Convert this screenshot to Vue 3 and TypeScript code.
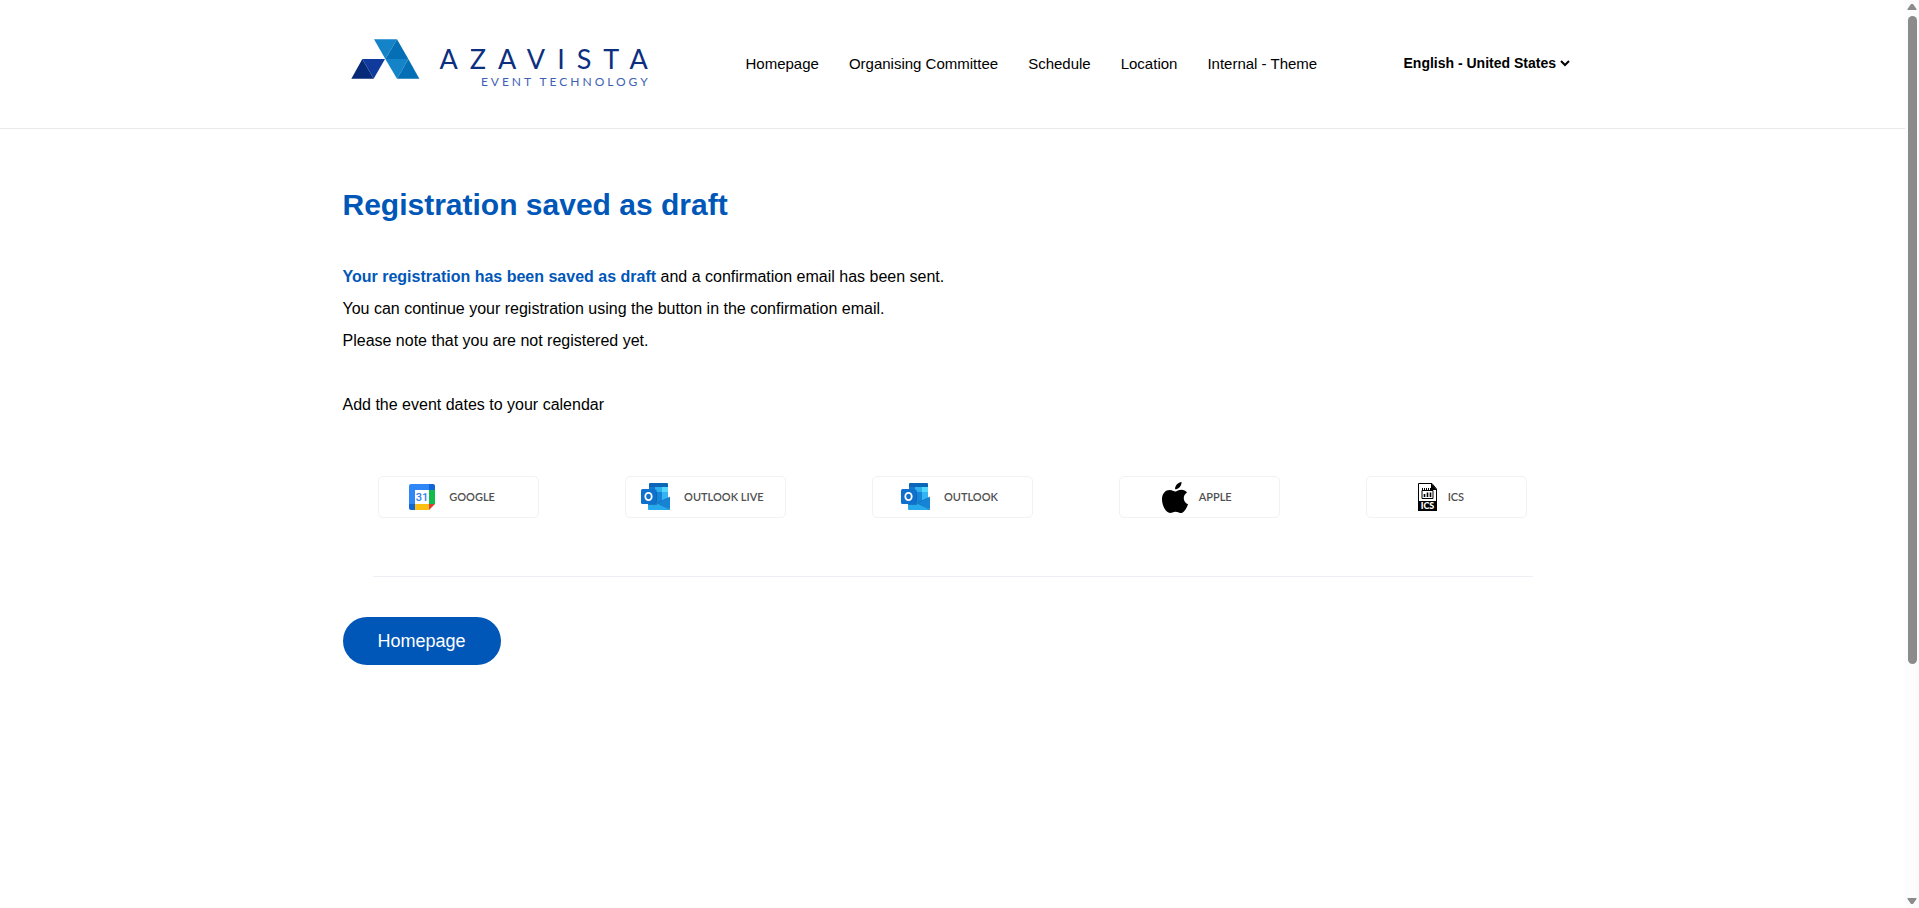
<script setup lang="ts">
import { ref } from 'vue'

interface CalendarLink {
  id: 'google' | 'outlook-live' | 'outlook' | 'apple' | 'ics'
  label: string
}

const navItems: string[] = ['Homepage', 'Organising Committee', 'Schedule', 'Location', 'Internal - Theme']

const calendars: CalendarLink[] = [
  { id: 'google', label: 'GOOGLE' },
  { id: 'outlook-live', label: 'OUTLOOK LIVE' },
  { id: 'outlook', label: 'OUTLOOK' },
  { id: 'apple', label: 'APPLE' },
  { id: 'ics', label: 'ICS' },
]

const language = ref('en-US')
</script>

<template>
  <div class="page">
    <div class="content">
      <header class="header">
        <div class="header-inner">
          <a href="#" class="logo">
            <svg class="logo-mark" viewBox="33 42 205 120" aria-hidden="true">
              <path d="M66 102 33 161H100Z" fill="#062a78" />
              <path d="M66 102H134L100 161Z" fill="#103a9c" />
              <path d="M101 43H170L135 102Z" fill="#1583c8" />
              <path d="M170 43 204 102H135Z" fill="#046fb4" />
              <path d="M135 102H204L170 161Z" fill="#1583c8" />
              <path d="M204 102 237 161H170Z" fill="#046fb4" />
            </svg>
            <span class="logo-text">
              <span class="logo-name">AZAVISTA</span>
              <span class="logo-tag">EVENT TECHNOLOGY</span>
            </span>
          </a>
          <nav class="nav">
            <a v-for="item in navItems" :key="item" href="#">{{ item }}</a>
          </nav>
          <select v-model="language" class="language" aria-label="Language">
            <option value="en-US">English - United States</option>
          </select>
        </div>
      </header>

      <main class="main">
        <h1>Registration saved as draft</h1>
        <div class="message">
          <p><strong>Your registration has been saved as draft</strong> and a confirmation email has been sent.</p>
          <p>You can continue your registration using the button in the confirmation email.</p>
          <p>Please note that you are not registered yet.</p>
        </div>
        <p class="calendar-title">Add the event dates to your calendar</p>

        <div class="calendars">
          <a v-for="cal in calendars" :key="cal.id" href="#" class="calendar" :class="cal.id">
            <svg v-if="cal.id === 'google'" class="icon-google" viewBox="0 0 26 26" aria-hidden="true">
              <path d="M2 0H20V6H6V20H0V2A2 2 0 0 1 2 0Z" fill="#2f86f6" />
              <path d="M20 0H24A2 2 0 0 1 26 2V6H20Z" fill="#1266d3" />
              <path d="M20 6H26V20H20Z" fill="#12bb4c" />
              <path d="M6 20H20V26H6Z" fill="#fbbf10" />
              <path d="M0 20H6V26H2A2 2 0 0 1 0 24Z" fill="#1266d3" />
              <path d="M20 20H26L20 26Z" fill="#df3b32" />
              <path d="M6 6H20V20H6Z" fill="#fff" />
              <text x="13" y="17" text-anchor="middle" font-family="Roboto, sans-serif" font-size="11" font-weight="500" fill="#2f80ee">31</text>
            </svg>
            <svg v-else-if="cal.id === 'outlook' || cal.id === 'outlook-live'" class="icon-outlook" viewBox="0 0 29 28" aria-hidden="true">
              <path d="M9 0H26A1 1 0 0 1 27 1V20H8V1A1 1 0 0 1 9 0Z" fill="#0c66b8" />
              <path d="M8 4H14V9H8Z" fill="#1477cb" />
              <path d="M14 4H21V9H14Z" fill="#2eb2ef" />
              <path d="M21 4H27V9H21Z" fill="#55d7fb" />
              <path d="M8 9H14V16H8Z" fill="#0b559f" />
              <path d="M14 9H21V20H14Z" fill="#1685d9" />
              <path d="M21 9H27V18H21Z" fill="#32b5f2" />
              <path d="M7 17 17 19 29 26A1 1 0 0 1 28 27H8A1 1 0 0 1 7 26Z" fill="#27a9ee" />
              <path d="M16 20 29 14V26Z" fill="#1683d5" />
              <path d="M16 20 29 26.500M16 20 29 14" fill="none" stroke="#1269b5" stroke-width="0.600" />
              <path d="M7 7H15A1 1 0 0 1 16 8V22H7Z" fill="#084b8d" opacity="0.500" />
              <rect x="0" y="6" width="15" height="15" rx="1.500" fill="#1071cc" />
              <ellipse cx="7.500" cy="13.500" rx="3.200" ry="3.700" fill="none" stroke="#fff" stroke-width="1.800" />
            </svg>
            <svg v-else-if="cal.id === 'apple'" class="icon-apple" viewBox="0 0 26 31" aria-hidden="true">
              <path d="M19.500 0C19.800 3.800 16.700 7.300 13.100 7.300 12.700 3.900 16 .5 19.500 0ZM25 10.600C20.300 13.500 20.800 20 26 22.300 25.200 24.800 22.500 30.500 19.300 31 17 31.200 16 29.700 13.600 29.700 11 29.700 10 31 8.100 31 3.800 31 0 23.300 0 17.500 0 11.200 3.700 8 7.600 8 10.200 8 11.900 9.500 13.300 9.500 14.700 9.500 16.700 7.800 19.700 7.800 21.500 7.800 23.700 8.700 25 10.600Z" fill="#000" />
            </svg>
            <svg v-else class="icon-ics" viewBox="0 0 19 28" aria-hidden="true">
              <path d="M1 .5H14L18.500 6V27.500H.5V.5Z" fill="#fff" stroke="#000" />
              <path d="M13 0 19 7H13Z" fill="#000" />
              <path d="M0 18H19V28H0Z" fill="#000" />
              <path d="M4 7.500H15V15.500H4Z" fill="#fff" stroke="#000" />
              <path d="M4.500 5V7M6.500 5V7M8.500 5V7M10.500 5V7M12.500 5V7" stroke="#000" />
              <path d="M6.500 11V14M9.500 9.500V14M12.500 9.500V14" stroke="#000" stroke-width="1.600" />
              <text x="9.500" y="26" text-anchor="middle" font-size="9" font-weight="900" fill="#fff">ICS</text>
            </svg>
            <span>{{ cal.label }}</span>
          </a>
        </div>

        <hr />
        <button type="button" class="home">Homepage</button>
      </main>
    </div>

    <div class="scrollbar" aria-hidden="true">
      <svg viewBox="0 0 10 8"><path d="M4 1H6L9.500 6V7H.5V6Z" fill="#8b8b8b" /></svg>
      <div class="track"><div class="thumb"></div></div>
      <svg viewBox="0 0 10 8"><path d="M4 7H6L9.500 2V1H.5V2Z" fill="#8b8b8b" /></svg>
    </div>
  </div>
</template>

<style>
body {
  margin: 0;
  background: #fff;
}
</style>

<style scoped>
.page {
  display: flex;
  min-height: 100vh;
  font-family: "Liberation Sans", Arial, sans-serif;
  font-size: 16px;
  color: #000;
}

.content {
  flex: 1;
  min-width: 0;
}

.header {
  border-bottom: 1px solid #e9e9e9;
}

.header-inner {
  display: flex;
  align-items: center;
  box-sizing: border-box;
  max-width: 1250px;
  min-height: 128px;
  margin: 0 auto;
  padding-bottom: 2px;
}

.logo {
  display: flex;
  align-items: flex-start;
  flex: 0 0 395px;
  gap: 20px;
  padding-top: 3px;
  padding-left: 23px;
  text-decoration: none;
  font-family: Lato, sans-serif;
}

.logo-mark {
  width: 69px;
  height: 40px;
}

.logo-text {
  display: flex;
  flex-direction: column;
  align-items: flex-end;
  padding-top: 5px;
}

.logo-name {
  font-size: 27px;
  line-height: 30px;
  letter-spacing: 12px;
  margin-right: -12px;
  color: #0d2f80;
}

.logo-tag {
  font-size: 12px;
  line-height: 16px;
  letter-spacing: 3px;
  margin-right: -3px;
  color: #3d61b5;
}

.nav {
  display: flex;
  gap: 30px;
  font-size: 15px;
  white-space: nowrap;
}

.nav a {
  color: #000;
  text-decoration: none;
}

.language {
  margin-left: auto;
  margin-right: 5px;
  border: 0;
  background: transparent;
  color: #000;
  font: 700 14px "Liberation Sans", Arial, sans-serif;
}

.main {
  max-width: 1220px;
  margin: 0 auto;
  padding-top: 56px;
}

h1 {
  margin: 0 0 36px;
  font-size: 30px;
  line-height: 40px;
  color: #0057b8;
}

p {
  margin: 0;
  line-height: 32px;
}

strong {
  color: #0057b8;
}

.message {
  margin-bottom: 32px;
}

.calendars {
  display: grid;
  grid-template-columns: repeat(5, 1fr);
  justify-items: center;
  margin: 55px -8px 0;
}

.calendar {
  display: flex;
  align-items: center;
  justify-content: center;
  box-sizing: border-box;
  width: 161px;
  height: 42px;
  gap: 14px;
  padding-right: 6px;
  border: 1px solid #f2f2f2;
  border-radius: 5px;
  color: #505050;
  font: 600 11px Lato, sans-serif;
  text-decoration: none;
}

.calendar span {
  padding-bottom: 2px;
}

.google,
.ics {
  padding-right: 12px;
}

.apple,
.ics {
  gap: 11px;
}

.icon-google {
  width: 26px;
  height: 26px;
}

.icon-outlook {
  width: 29px;
  height: 28px;
}

.icon-apple {
  width: 26px;
  height: 31px;
}

.icon-ics {
  width: 19px;
  height: 28px;
}

hr {
  margin: 58px 30px 40px;
  border: 0;
  border-top: 1px solid #f0eef5;
}

.home {
  height: 48px;
  padding: 0 35px;
  border: 0;
  border-radius: 24px;
  background: #0057b8;
  color: #fff;
  font: 18px "Liberation Sans", Arial, sans-serif;
}

.scrollbar {
  position: sticky;
  top: 0;
  display: flex;
  flex-direction: column;
  align-items: center;
  gap: 5px;
  box-sizing: border-box;
  width: 14px;
  height: 100vh;
  padding: 3px 0;
  background: #fcfcfc;
}

.scrollbar svg {
  width: 10px;
  height: 8px;
}

.track {
  flex: 1;
  width: 9px;
}

.thumb {
  height: 74%;
  border-radius: 5px;
  background: #8b8b8b;
}
</style>
